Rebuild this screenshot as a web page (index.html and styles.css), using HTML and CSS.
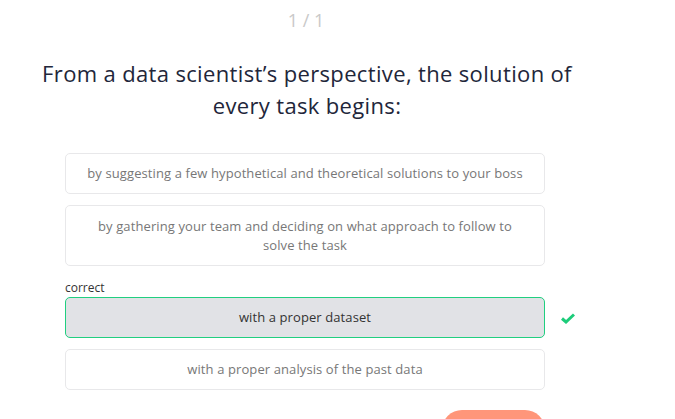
FILE: index.html
```html
<!DOCTYPE html>
<html>
<head>
<meta charset="utf-8">
<link rel="stylesheet" href="styles.css">
</head>
<body>
<div class="page">
  <div class="counter">1 / 1</div>
  <h1 class="question">From a data scientist’s perspective, the solution of every task begins:</h1>
  <div class="options">
    <div class="option">by suggesting a few hypothetical and theoretical solutions to your boss</div>
    <div class="option option-tall">by gathering your team and deciding on what approach to follow to solve the task</div>
    <div class="group">
      <div class="label">correct</div>
      <div class="correct-row">
        <div class="option option-correct">with a proper dataset</div>
        <svg class="check" width="14" height="11" viewBox="0 0 14 11"><path d="M1 5.5 L5 9 L13 1.5" fill="none" stroke="#1dcc7a" stroke-width="3"/></svg>
      </div>
    </div>
    <div class="option">with a proper analysis of the past data</div>
  </div>
  <div class="actions"><div class="btn"></div></div>
</div>
</body>
</html>
```
FILE: styles.css
```css
html, body { margin: 0; padding: 0; background: #fff; overflow: hidden; }
body { font-family: "Open Sans", "Lato", sans-serif; }
.page { width: 600px; margin-left: 5px; display: flex; flex-direction: column; align-items: center; }
.counter { margin-top: 8px; font-size: 18px; color: #c9c9c9; line-height: 24px; margin-left: 2px; }
.question { margin: 25px 0 0 4px; font-weight: 400; font-size: 22px; letter-spacing: 0.35px; line-height: 32px; color: #22263a; text-align: center; width: 570px; }
.options { width: 480px; margin-top: 32px; display: flex; flex-direction: column; gap: 11px; }
.option { box-sizing: border-box; border: 1px solid #e8e8ea; border-radius: 5px; min-height: 41px; padding: 10px 20px; text-align: center; font-size: 13px; letter-spacing: 0.1px; line-height: 19px; color: #777; background: #fff; }
.option-tall { padding: 11px 30px 10px; }
.group { display: flex; flex-direction: column; gap: 1px; margin-top: 3px; }
.label { font-size: 12px; color: #333; line-height: 16px; }
.correct-row { position: relative; }
.option-correct { background: #e1e2e6; border-color: #20cf80; color: #333; }
.check { position: absolute; left: 496px; top: 16px; }
.actions { width: 480px; display: flex; justify-content: flex-end; margin-top: 20px; }
.btn { width: 103px; height: 40px; border-radius: 20px; background: #ff967a; }
```
